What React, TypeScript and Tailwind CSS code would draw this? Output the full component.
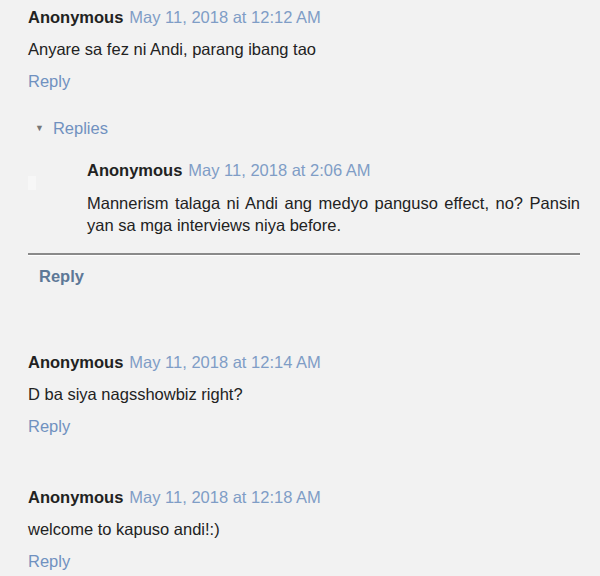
import React from "react"

type Comment = { date: string; body: string }

const font = { fontFamily: '"Liberation Sans", Arial, sans-serif' }

function Header({ date }: { date: string }) {
  return (
    <div className="flex items-baseline gap-[6px] leading-[32px]">
      <span className="font-bold text-[#222]">Anonymous</span>
      <span className="text-[#7f9dc6]">{date}</span>
    </div>
  )
}

function TopComment({ c }: { c: Comment }) {
  return (
    <div className="pl-[28px]">
      <Header date={c.date} />
      <p className="leading-[32px] text-[#222]">{c.body}</p>
      <p className="leading-[32px] text-[#7091c0]">Reply</p>
    </div>
  )
}

export default function App() {
  return (
    <div className="h-[576px] w-[600px] overflow-hidden bg-[#f2f2f2] pt-px text-[16.5px]" style={font}>
      <TopComment c={{ date: "May 11, 2018 at 12:12 AM", body: "Anyare sa fez ni Andi, parang ibang tao" }} />

      {/* Replies thread */}
      <div className="mt-[15px] flex items-center gap-[9px] pl-[35px] leading-[32px] text-[#7091c0]">
        <span className="text-[9px] text-[#777]">▼</span>
        <span>Replies</span>
      </div>

      <div className="relative mt-[10px] pl-[87px] pr-[20px]">
        <div className="absolute left-[28px] top-[22px] h-[14px] w-[8px] bg-white/40" />
        <Header date="May 11, 2018 at 2:06 AM" />
        <p className="mt-[6px] text-justify leading-[22px] text-[#222]">
          Mannerism talaga ni Andi ang medyo panguso effect, no? Pansin yan sa mga interviews niya before.
        </p>
      </div>

      <div className="ml-[28px] mr-[20px] mt-[17px] border-t-2 border-[#8a8a8a] shadow-[0_1px_0_#ffffff]" />
      <p className="mt-[5px] pl-[39px] font-bold leading-[32px] text-[#5d7897]">Reply</p>

      <div className="mt-[54px]">
        <TopComment c={{ date: "May 11, 2018 at 12:14 AM", body: "D ba siya nagsshowbiz right?" }} />
      </div>
      <div className="mt-[39px]">
        <TopComment c={{ date: "May 11, 2018 at 12:18 AM", body: "welcome to kapuso andi!:)" }} />
      </div>
    </div>
  )
}
